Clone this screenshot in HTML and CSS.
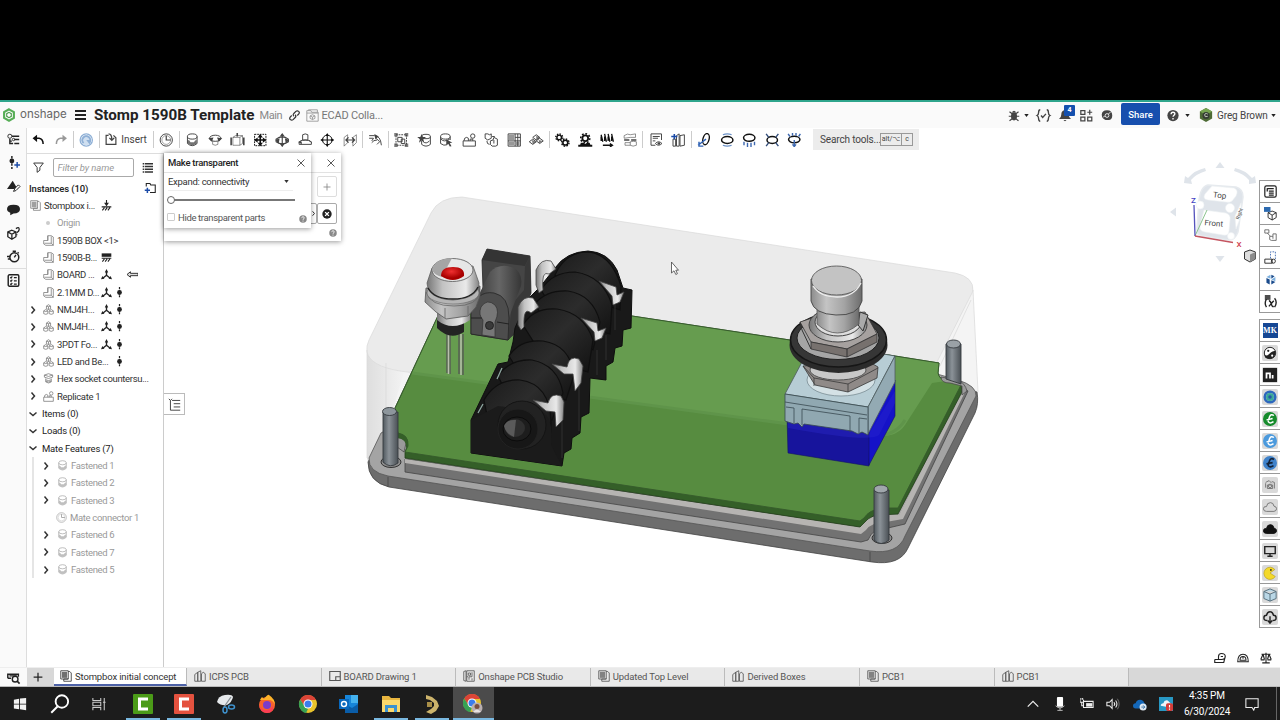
FILE: index.html
```html
<!DOCTYPE html>
<html lang="en">
<head>
    <meta charset="UTF-8">
    <meta name="viewport" content="width=device-width, initial-scale=1.0">
    <title>Stomp 1590B Template</title>
    <link rel="stylesheet" href="styles.css">
</head>
<body>
    <!-- icon sprites, all on a 16 x 16 grid -->
    <svg class="sprites">
        <symbol id="caret" viewBox="0 0 16 16"><path class="f" d="M1 3h14l-7 10z"/></symbol>
        <symbol id="chev" viewBox="0 0 16 16"><path d="M5 1l6 7-6 7" stroke-width="3"/></symbol>
        <symbol id="chevdown" viewBox="0 0 16 16"><path d="M1 5l7 6 7-6" stroke-width="3"/></symbol>
        <symbol id="close" viewBox="0 0 16 16"><path d="M1 1l14 14M15 1L1 15"/></symbol>
        <symbol id="help" viewBox="0 0 16 16"><circle class="f" cx="8" cy="8" r="7.5"/><path d="M5.5 6.2c0-3.4 5-3.2 5-.4 0 1.8-2.4 1.8-2.4 3.8M8 11.2v2" stroke="#fff" stroke-width="1.8"/></symbol>
        <symbol id="assembly" viewBox="0 0 16 16"><path d="M1 1h10v11H1zM11 2h2l2 2v11H5v-3h6"/><path class="f" d="M2.500 2.500h7v8h-7z" opacity=".7"/></symbol>
        <symbol id="part" viewBox="0 0 16 16"><path d="M7 1h5l3 2v12H4l-3-2V8h6zM12 2v10H2M12 12l3 3M7 8V1"/></symbol>
        <symbol id="subasm" viewBox="0 0 16 16"><path d="M5 3l3-2 3 2v4L8 8 5 7zM5 3l3 1 3-1M8 4v4M1 10l3-2 3 2v4l-3 1-3-1zM1 10l3 1 3-1M9 10l3-2 3 2v4l-3 1-3-1zM9 10l3 1 3-1"/></symbol>
        <symbol id="bolt" viewBox="0 0 16 16"><path d="M2 3q6-4 12 0v3q-6 4-12 0zM2 3q6 4 12 0M4 8v5q4 3 8 0V8M4 10q4 2 8 0M4 12q4 2 8 0"/></symbol>
        <symbol id="replicate" viewBox="0 0 16 16"><path d="M1 9h14v6H1zM2 9q0-4 3-4t2 4M9 9V7h3v2"/><circle cx="12" cy="3.500" r="2.500"/></symbol>
        <symbol id="tripod" viewBox="0 0 16 16"><path d="M8 9V3M8 9l-5 4M8 9l5 4" stroke-width="2"/><path class="f" d="M5.500 5L8 0l2.500 5zM0 15l2-5 3 4zM16 15l-2-5-3 4z"/></symbol>
        <symbol id="dof" viewBox="0 0 16 16"><path d="M8 0v16" stroke-width="1.8" stroke-dasharray="3 1"/><circle class="f" cx="8" cy="8" r="3.5"/></symbol>
        <symbol id="ground" viewBox="0 0 16 16"><path d="M8 0v8M1 10h14M2 15l3-4M6 15l3-4M10 15l3-4" stroke-width="1.6"/><path class="f" d="M4.500 4h7L8 9z"/></symbol>
        <symbol id="group" viewBox="0 0 16 16"><path class="f" d="M1 2h14v5H1z"/><path d="M1 9h14M2 14l3-4M6 14l3-4M10 14l3-4" stroke-width="1.5"/></symbol>
        <symbol id="leftarrow" viewBox="0 0 16 16"><path d="M0 8l5-4v2.300h11v3.400H5V12z" fill="#ddd" stroke-width="1.300"/></symbol>
        <symbol id="clock" viewBox="0 0 16 16"><circle cx="8" cy="8" r="7"/><circle cx="8" cy="8" r="5" opacity=".5"/><path d="M8 3v5h5" stroke-width="1.4"/></symbol>
        <symbol id="cyl" viewBox="0 0 16 16"><ellipse cx="8" cy="4" rx="5.500" ry="3"/><path d="M2.500 4v8q5.500 5 11 0V4"/><path class="f" d="M3 8q2 0 3 2.500h4Q11 8 13 8v4q-5 4-10 0z" opacity=".75"/></symbol>
        <symbol id="revolve" viewBox="0 0 16 16"><ellipse cx="8" cy="6" rx="6.500" ry="3.500"/><path d="M5 9v4q3 2 6 0V9" opacity=".6"/><path class="f" d="M0 6l6-1-2 5zM16 6l-6-1 2 5z"/></symbol>
        <symbol id="slider" viewBox="0 0 16 16"><path d="M3 5h8v9H3zM3 5l3-2h8l-3 2M14 3v9l-3 2" opacity=".6"/><path d="M1 5v9M15.500 5v9M8 0v4" stroke-width="1.8"/></symbol>
        <symbol id="planar" viewBox="0 0 16 16"><path d="M1.500 1.500h13v13h-13z" stroke-dasharray="2 1"/><path d="M8 2v12M2 8h12" stroke-width="1.800"/><path class="f" d="M5 5l3-4 3 4zM5 11l3 4 3-4zM5 5L1 8l4 3zM11 5l4 3-4 3z"/></symbol>
        <symbol id="cylindrical" viewBox="0 0 16 16"><path d="M1 7q7-5 14 0v3q-7 5-14 0zM8 1v14" stroke-width="1.3"/><path class="f" d="M5 4l3-4 3 4zM5 12l3 4 3-4zM0 8l5-2-1 6zM16 8l-5-2 1 6z"/></symbol>
        <symbol id="pinslot" viewBox="0 0 16 16"><path d="M5 2q3-2 6 0v6H5zM1 10q7-4 14 0v3H1zM4 8l-3 3M12 8l3 3"/><path class="f" d="M0 10h4v3z"/></symbol>
        <symbol id="ball" viewBox="0 0 16 16"><circle cx="8" cy="8" r="5.500"/><path d="M8 1v14M1 8h14" stroke-width="1.300"/><path class="f" d="M6 3.500L8 0l2 3.500zM6 12.500L8 16l2-3.500zM3.500 6L0 8l3.500 2zM12.500 6L16 8l-3.500 2z"/></symbol>
        <symbol id="parallel" viewBox="0 0 16 16"><path d="M1 5l4-3v9l-4 4zM11 5l4-3v9l-4 4z" opacity=".6"/><path d="M3 8h10M6 5L3 8l3 3M10 5l3 3-3 3" stroke-width="1.400"/></symbol>
        <symbol id="tangent" viewBox="0 0 16 16"><path d="M1 3h6q7 0 8 11M1 6h5l-2 3M10 8q-4 0-6 3M9 6l4 4-3 3"/><path class="f" d="M7 1l5 3-4 3z"/></symbol>
        <symbol id="groupbox" viewBox="0 0 16 16"><path d="M2 2h12v12H2z" stroke-dasharray="2 1"/><path d="M4 5h5v5H4zM8 7h4v5H8z"/><path class="f" d="M0 0h4v4H0zM12 0h4v4h-4zM0 12h4v4H0zM12 12h4v4h-4z" opacity=".7"/></symbol>
        <symbol id="starcyl" viewBox="0 0 16 16"><ellipse cx="10" cy="4" rx="5" ry="2.500"/><path d="M15 4v9q-5 4-10 0V9M7 10q3 3 7-1"/><path class="f" d="M5 1l1.500 3.500H10L7 7l1 4-3-2.500L2 11l1-4-3-2.500h3.500z"/></symbol>
        <symbol id="selcyl" viewBox="0 0 16 16"><ellipse cx="7" cy="4" rx="5.500" ry="3"/><path d="M1.500 4v8q4 3 7 1.500M12.500 4v4M2 7q3 4 10 0"/><path class="f" d="M8 7l7 4-3 .5 2 3.500-2 .500-1.500-3L8 14z"/></symbol>
        <symbol id="pattern" viewBox="0 0 16 16"><path d="M1 1h3l2 1 2-1v5L4 8 1 6zM7 9l3-1 1-3 4 2v7l-2 1H9l-2-2z"/><path d="M3 9q0 4 3 4M9 4h3M11 8v4"/></symbol>
        <symbol id="gridbox" viewBox="0 0 16 16"><path d="M1 1h14v14H1z"/><path class="f" d="M2 2h6v6H2zM2 10h6v4H2zM10 10h4v4h-4z" opacity=".55"/><path d="M9 1v14M1 9h14M12 1v14M9 5h6"/></symbol>
        <symbol id="explode" viewBox="0 0 16 16"><path d="M8 2l4 3-4 3-4-3zM4 7l4 3-4 3-4-3zM12 6l4 3-4 3-4-3z"/><path class="f" d="M3 8l5 2-4 3zM8 3l4 2-4 3zM11 8l4 1-4 3z" opacity=".7"/></symbol>
        <symbol id="gears" viewBox="0 0 16 16"><circle cx="4.500" cy="5" r="2.600" stroke-width="1.600"/><circle cx="4.500" cy="5" r="3.900" stroke-width="1.600" stroke-dasharray="1.600 1.450"/><circle cx="11.500" cy="11" r="2.800" stroke-width="1.800"/><circle cx="11.500" cy="11" r="4.200" stroke-width="1.600" stroke-dasharray="1.800 1.500"/></symbol>
        <symbol id="rack" viewBox="0 0 16 16"><circle cx="8" cy="6" r="3.300" stroke-width="2"/><circle cx="8" cy="6" r="5.200" stroke-width="1.800" stroke-dasharray="2 2"/><path d="M0 14.500h16" stroke-width="2.200"/><path class="f" d="M3 11h3l2 1.500 2-1.500h3l1 3H2z"/></symbol>
        <symbol id="screw" viewBox="0 0 16 16"><path d="M1 2l2 8M5 1l2 9M9 1l2 9M13 1l2 9M1 4v5M5 4v5M9 4v5M13 4v5" stroke-width="1.500"/><path d="M3 14h11M11 12l3 2-3 2" stroke-width="1.500"/></symbol>
        <symbol id="linear" viewBox="0 0 16 16"><path d="M1 3q4-3 7-1l6-1v4H8L1 6zM8 10q4-1 7 0v4q-4 2-7 0zM8 11H2v3h6" opacity=".6"/><path d="M9 8h6M1 8h6" stroke-width="1.600"/></symbol>
        <symbol id="report" viewBox="0 0 16 16"><path d="M2 1h12v7M2 1v13h5M4 4h8M4 6h6M4 9h3"/><path d="M7 12q3.500-4 7.500 0-4 4-7.500 0z"/><circle class="f" cx="11" cy="12" r="1.500"/></symbol>
        <symbol id="bom" viewBox="0 0 16 16"><path d="M6 3l3-2v14H6zM10 3l5-1v12l-5 1zM2 7h3v8H2z"/><path d="M0 4h7M3.500 1v6" stroke="#1c4ca8" stroke-width="1.800"/></symbol>
        <symbol id="ring1" viewBox="0 0 16 16"><ellipse cx="10" cy="7" rx="3.500" ry="6.500" stroke-width="1.600" transform="rotate(15 10 7)"/><path d="M1 14l5-4 4-3M2 10v5h5" stroke="#2f62b5" stroke-width="1.700"/></symbol>
        <symbol id="ring2" viewBox="0 0 16 16"><ellipse cx="8" cy="8" rx="6.500" ry="4" stroke-width="1.700"/><path d="M3 2q5-2 10 0M3 14q5 2 10 0" stroke="#6d93c9" stroke-width="1.500"/></symbol>
        <symbol id="ring3" viewBox="0 0 16 16"><ellipse cx="8" cy="5.500" rx="6.500" ry="4" stroke-width="1.700"/><path d="M2 10v4M6 11v5M10 11v5M14 10v4" stroke="#3d68b0" stroke-width="1.600"/></symbol>
        <symbol id="ring4" viewBox="0 0 16 16"><ellipse cx="8" cy="8" rx="6" ry="4" stroke-width="1.700"/><path d="M1 1l3 4M15 1l-3 4M1 15l3-4M15 15l-3-4" stroke="#334d7a" stroke-width="1.600"/></symbol>
        <symbol id="ring5" viewBox="0 0 16 16"><ellipse cx="8" cy="7.500" rx="6.500" ry="3.700" stroke-width="1.700"/><path d="M1 1l2 3M6 0v3M10 0v3M15 1l-2 3M8 8v7M6 13l2 2.500 2-2.500" stroke="#3d68b0" stroke-width="1.600"/></symbol>
        <symbol id="undo" viewBox="0 0 16 16"><path d="M4 6.500h5q5 1 5 7" stroke-width="1.900"/><path class="f" d="M6.500 2v9L1 6.500z"/></symbol>
        <symbol id="regen" viewBox="0 0 16 16"><circle cx="8" cy="8" r="7" stroke-width="1.500"/><circle cx="8" cy="8" r="6" fill="#cfdff0" stroke="none"/><path d="M5 11.500A4.500 4.500 0 1 1 11.500 11" stroke-width="2.200"/><path class="f" d="M8 8h5l-1 5z"/></symbol>
        <symbol id="insert" viewBox="0 0 16 16"><path d="M5 3H2v11h12V6l-3-3M2 14V5" stroke-width="1.500"/><path d="M5 1q4 0 4 7M6 6l3 3 3-3" stroke-width="1.600"/></symbol>
        <symbol id="partstudio" viewBox="0 0 16 16"><path d="M1 6l4-3v12H1zM5 3l4-2v14H5zM10 5q2-4 5 0v10h-5z"/></symbol>
        <symbol id="drawing" viewBox="0 0 16 16"><path d="M1 2h14v12H1zM9 14v-5h6" stroke-width="1.500"/></symbol>
        <symbol id="pcb" viewBox="0 0 16 16"><path d="M1 2l3-1v14l-3-1zM5 1h10v14H5zM7 4h3v3H7zM12 3v6H8v4M12 11v3M5 9h2"/></symbol>
        <symbol id="euro" viewBox="0 0 16 16"><circle class="f" cx="8" cy="8" r="8"/><path d="M12.500 4Q9 1.500 7.500 5.500T6 11q2 3 6 0M4 9l7-1.500" stroke="#fff" stroke-width="1.700"/></symbol>
        <symbol id="euro-dark" viewBox="0 0 16 16"><circle class="f" cx="8" cy="8" r="8"/><path d="M12.500 4Q9 1.500 7.500 5.500T6 11q2 3 6 0M4 9l7-1.500" stroke="#142339" stroke-width="1.900"/></symbol>
        <symbol id="cloud" viewBox="0 0 16 16"><path d="M4 13q-3.500 0-3.500-3T4 7.500Q4.500 3 8.500 3q3.500 0 4 4 3 .500 3 3t-3 3z"/></symbol>
        <symbol id="cube" viewBox="0 0 16 16"><path d="M8 1l7 3v8l-7 3-7-3V4zM1 4l7 3 7-3M8 7v8"/></symbol>
    </svg>

    <div class="letterbox"></div>

    <header class="header">
        <svg class="logo" viewBox="0 0 16 16"><path d="M8 1.500l5.600 3.200v6.600L8 14.500l-5.600-3.200V4.700z" fill="none" stroke="#57ae57" stroke-width="2.400"/><path d="M8 5l2.600 1.500v3L8 11 5.400 9.500v-3z" fill="#fff" stroke="#4b9b4b" stroke-width="1.300"/></svg>
        <span class="brand">onshape</span>
        <div class="burger"><i></i><i></i><i></i></div>
        <h1 class="doc-title">Stomp 1590B Template</h1>
        <span class="branch">Main</span>
        <svg class="icon link" viewBox="0 0 16 16"><path d="M7 9q-2-2 0-4l3-3q2-1.500 4 0t0 4l-2 2M9 7q2 2 0 4l-3 3q-2 1.500-4 0t0-4l2-2" stroke-width="1.800"/></svg>
        <svg class="icon folder" viewBox="0 0 16 16"><path d="M1 15V2h5l1 2h8v11zM1 5h14M3 2V1h11v3"/><path d="M8 7l3 1.500v3L8 13l-3-1.500v-3zM5 8.500L8 10l3-1.500M8 10v3"/></svg>
        <span class="project">ECAD Colla...</span>
        <div class="account">
            <svg class="icon solid bug" viewBox="0 0 16 16"><ellipse class="f" cx="8" cy="9" rx="4" ry="5.500"/><path d="M1 9h14M2 3l4 3M14 3l-4 3M2 15l4-3M14 15l-4-3" stroke-width="1.600"/><path class="f" d="M5 4q3-5 6 0z"/></svg>
            <svg class="icon small-caret"><use href="#caret"/></svg>
            <svg class="icon braces" viewBox="0 0 16 16"><path d="M4 1Q2 1 2 4t-2 4q2 1 2 4t2 3M12 1q2 0 2 3t2 4q-2 1-2 4t-2 3M5 8l2 2.500L11 6" stroke-width="1.700"/></svg>
            <div class="bell">
                <svg class="icon solid" viewBox="0 0 16 16"><path class="f" d="M8 1q5 0 5 6 0 4 3 5.500H0Q3 11 3 7q0-6 5-6zM6 14h4q-2 3-4 0z"/></svg>
                <span class="badge">4</span>
            </div>
            <svg class="icon apps" viewBox="0 0 16 16"><path d="M1 2h5v4.500H1zM1 10h5v4.500H1zM9.500 10h5v4.500h-5zM12 1v6M9 4h6" stroke-width="1.500"/></svg>
            <svg class="icon solid head" viewBox="0 0 16 16"><path class="f" d="M8 1q7 0 7 7 0 5-4 6H6q-5-2-5-7 0-6 7-6z"/><circle cx="8" cy="8" r="2.500" stroke="#fff"/><path d="M10 6l3-3M5 9l-2 1" stroke="#fff"/></svg>
            <button class="share">Share</button>
            <svg class="icon solid qmark"><use href="#help"/></svg>
            <svg class="icon small-caret"><use href="#caret"/></svg>
            <svg class="avatar" viewBox="0 0 16 16"><path d="M8 0l7 4v8l-7 4-7-4V4z" fill="#4e6b35"/><path d="M8 0l7 4-7 4-7-4z" fill="#77a451"/><circle cx="8" cy="8.500" r="4" fill="#353c34"/><path d="M10 7q-3-2-3.500 1t3.500 1.500" stroke="#cfd6c8" fill="none"/></svg>
            <span class="user">Greg Brown</span>
            <svg class="icon small-caret"><use href="#caret"/></svg>
        </div>
    </header>

    <main class="main">
        <nav class="rail">
            <svg class="icon" viewBox="0 0 16 16"><circle cx="3.500" cy="4" r="2.500"/><path d="M3.500 7v6h4M6 4h9M9 8h6M9 13h6M3 10h3" stroke-width="1.700"/><circle cx="8" cy="8" r="1.500"/></svg>
            <svg class="icon" viewBox="0 0 16 16"><path d="M6 0v16" stroke-width="1.800" stroke-dasharray="3 1.500"/><circle class="f" cx="6" cy="6" r="3"/><path d="M9 11h7M12.500 7.500v7" stroke="#1c4ca8" stroke-width="1.800"/></svg>
            <svg class="icon" viewBox="0 0 16 16"><path class="f" d="M7 1l6 10H0z"/><path d="M8 14l2-4 4-4 2 2-5 5z" fill="#fff" stroke-width="1.200"/></svg>
            <svg class="icon" viewBox="0 0 16 16"><path class="f" d="M8 2q8 0 8 5.500T8 13L4 15v-3Q0 11 0 7.500 0 2 8 2z"/></svg>
            <svg class="icon" viewBox="0 0 16 16"><path d="M6 4l5 2v6l-5 3-5-3V6zM1 6l5 3 5-3M6 9v6" stroke-width="1.600"/><path d="M11 2q4-3 4 1 0 2-3 4M12 9v1" stroke-width="1.600"/></svg>
            <svg class="icon" viewBox="0 0 16 16"><circle cx="9" cy="9" r="5.500" stroke-width="1.800"/><path d="M9 9l2-3M7 1.500h4M0 8h4M1 11h3M13 3l1.500 1" stroke-width="1.700"/></svg>
            <svg class="icon last" viewBox="0 0 16 16"><rect x="1.500" y="1" width="13" height="14" rx="1.500" stroke-width="1.800"/><path d="M4 4l1 1 1.500-2M4 8l1 1 1.500-2M4 12l1 1 1.500-2M8.500 4.500H12M8.500 8.500H12M8.500 12.500H12" stroke-width="1.400"/></svg>
        </nav>

        <div class="work">
            <div class="toolbar">
                <svg class="tool small dark"><use href="#undo"/></svg>
                <svg class="tool redo"><use href="#undo"/></svg>
                <i class="sep"></i>
                <svg class="tool regen"><use href="#regen"/></svg>
                <i class="sep"></i>
                <div class="insert"><svg class="tool"><use href="#insert"/></svg>Insert</div>
                <i class="sep"></i>
                <svg class="tool"><use href="#clock"/></svg>
                <i class="sep"></i>
                <svg class="tool"><use href="#cyl"/></svg>
                <svg class="tool"><use href="#revolve"/></svg>
                <svg class="tool"><use href="#slider"/></svg>
                <svg class="tool dark"><use href="#planar"/></svg>
                <svg class="tool"><use href="#cylindrical"/></svg>
                <svg class="tool"><use href="#pinslot"/></svg>
                <svg class="tool dark"><use href="#ball"/></svg>
                <svg class="tool"><use href="#parallel"/></svg>
                <i class="sep"></i>
                <svg class="tool"><use href="#tangent"/></svg>
                <i class="sep"></i>
                <svg class="tool"><use href="#groupbox"/></svg>
                <svg class="tool"><use href="#starcyl"/></svg>
                <svg class="tool"><use href="#selcyl"/></svg>
                <svg class="tool"><use href="#replicate"/></svg>
                <svg class="tool"><use href="#pattern"/></svg>
                <svg class="tool"><use href="#gridbox"/></svg>
                <svg class="tool"><use href="#explode"/></svg>
                <i class="sep"></i>
                <svg class="tool dark"><use href="#gears"/></svg>
                <svg class="tool dark"><use href="#rack"/></svg>
                <svg class="tool dark"><use href="#screw"/></svg>
                <svg class="tool"><use href="#linear"/></svg>
                <i class="sep"></i>
                <svg class="tool"><use href="#report"/></svg>
                <svg class="tool"><use href="#bom"/></svg>
                <i class="sep"></i>
                <svg class="tool dark"><use href="#ring1"/></svg>
                <svg class="tool dark"><use href="#ring2"/></svg>
                <svg class="tool dark"><use href="#ring3"/></svg>
                <svg class="tool dark"><use href="#ring4"/></svg>
                <svg class="tool dark"><use href="#ring5"/></svg>
                <div class="search"><span>Search tools...</span><kbd>alt/⌥</kbd><kbd>c</kbd></div>
            </div>

            <div class="workspace">
                <aside class="panel">
                    <div class="filter">
                        <svg class="icon" viewBox="0 0 16 16"><path d="M1 1.500h14L10 8v4l-4 3V8z" stroke-width="1.400"/></svg>
                        <input type="text" placeholder="Filter by name">
                        <svg class="icon" viewBox="0 0 16 16"><path d="M1 2.500h2M4 2.500h12M1 6.500h2M4 6.500h12M1 10.500h2M4 10.500h12M1 14.500h2M4 14.500h12" stroke-width="2"/></svg>
                    </div>
                    <div class="instances">
                        <span>Instances (10)</span>
                        <svg class="icon" viewBox="0 0 16 16"><path d="M3 6V2h5l1 2h6v10H8" stroke-width="1.400"/><path d="M1 11h7M4.500 7.500v7" stroke="#1c4ca8" stroke-width="2"/></svg>
                    </div>
                    <ul class="tree">
                        <li class="root"><svg class="ic"><use href="#assembly"/></svg><span class="name">Stompbox i...</span><svg class="st"><use href="#ground"/></svg></li>
                        <li class="origin"><b></b><span class="name">Origin</span></li>
                        <li><svg class="ic"><use href="#part"/></svg><span class="name wide">1590B BOX &lt;1&gt;</span></li>
                        <li><svg class="ic"><use href="#part"/></svg><span class="name">1590B-B...</span><svg class="st"><use href="#group"/></svg></li>
                        <li><svg class="ic"><use href="#part"/></svg><span class="name">BOARD ...</span><svg class="st"><use href="#tripod"/></svg><svg class="st far"><use href="#leftarrow"/></svg></li>
                        <li><svg class="ic"><use href="#part"/></svg><span class="name">2.1MM D...</span><svg class="st"><use href="#tripod"/></svg><svg class="st"><use href="#dof"/></svg></li>
                        <li class="open"><svg class="ch"><use href="#chev"/></svg><svg class="ic"><use href="#subasm"/></svg><span class="name">NMJ4H...</span><svg class="st"><use href="#tripod"/></svg><svg class="st"><use href="#dof"/></svg></li>
                        <li class="open"><svg class="ch"><use href="#chev"/></svg><svg class="ic"><use href="#subasm"/></svg><span class="name">NMJ4H...</span><svg class="st"><use href="#tripod"/></svg><svg class="st"><use href="#dof"/></svg></li>
                        <li class="open"><svg class="ch"><use href="#chev"/></svg><svg class="ic"><use href="#subasm"/></svg><span class="name">3PDT Fo...</span><svg class="st"><use href="#tripod"/></svg><svg class="st"><use href="#dof"/></svg></li>
                        <li class="open"><svg class="ch"><use href="#chev"/></svg><svg class="ic"><use href="#subasm"/></svg><span class="name led">LED and Be...</span><svg class="st"><use href="#dof"/></svg></li>
                        <li class="open"><svg class="ch"><use href="#chev"/></svg><svg class="ic"><use href="#bolt"/></svg><span class="name wide">Hex socket countersu...</span></li>
                        <li class="open"><svg class="ch"><use href="#chev"/></svg><svg class="ic"><use href="#replicate"/></svg><span class="name wide">Replicate 1</span></li>
                        <li class="open section"><svg class="ch"><use href="#chevdown"/></svg>Items (0)</li>
                        <li class="open section"><svg class="ch"><use href="#chevdown"/></svg>Loads (0)</li>
                        <li class="open section"><svg class="ch"><use href="#chevdown"/></svg>Mate Features (7)</li>
                    </ul>
                    <ul class="tree mates">
                        <li><svg class="ch"><use href="#chev"/></svg><svg class="ic"><use href="#cyl"/></svg>Fastened 1</li>
                        <li><svg class="ch"><use href="#chev"/></svg><svg class="ic"><use href="#cyl"/></svg>Fastened 2</li>
                        <li><svg class="ch"><use href="#chev"/></svg><svg class="ic"><use href="#cyl"/></svg>Fastened 3</li>
                        <li class="leaf"><svg class="ic"><use href="#clock"/></svg>Mate connector 1</li>
                        <li><svg class="ch"><use href="#chev"/></svg><svg class="ic"><use href="#cyl"/></svg>Fastened 6</li>
                        <li><svg class="ch"><use href="#chev"/></svg><svg class="ic"><use href="#cyl"/></svg>Fastened 7</li>
                        <li><svg class="ch"><use href="#chev"/></svg><svg class="ic"><use href="#cyl"/></svg>Fastened 5</li>
                    </ul>
                </aside>

                <section class="viewport">
                    <svg class="scene" viewBox="164 153 1116 514">
                        <defs>
                            <linearGradient id="pin"><stop offset="0" stop-color="#50585e"/><stop offset=".4" stop-color="#8b9298"/><stop offset="1" stop-color="#4a5055"/></linearGradient>
                            <linearGradient id="steel"><stop offset="0" stop-color="#8c8c8c"/><stop offset=".3" stop-color="#c4c4c4"/><stop offset=".65" stop-color="#a4a4a4"/><stop offset="1" stop-color="#6c6c6c"/></linearGradient>
                            <linearGradient id="chrome"><stop offset="0" stop-color="#777"/><stop offset=".3" stop-color="#c2c2c2"/><stop offset=".75" stop-color="#e9e9e9"/><stop offset="1" stop-color="#858585"/></linearGradient>
                            <linearGradient id="wall"><stop offset="0" stop-color="#dedede"/><stop offset="1" stop-color="#f3f3f3"/></linearGradient>
                            <linearGradient id="disc" x1="0" y1="0" x2="1" y2="1"><stop offset="0" stop-color="#1b1b1b"/><stop offset=".45" stop-color="#2c2c2c"/><stop offset="1" stop-color="#121212"/></linearGradient>
                            <linearGradient id="barrel"><stop offset="0" stop-color="#3b3b3b"/><stop offset=".5" stop-color="#666"/><stop offset="1" stop-color="#363636"/></linearGradient>
                            <radialGradient id="bulb" cx=".45" cy=".35"><stop offset="0" stop-color="#f03030"/><stop offset="1" stop-color="#a80000"/></radialGradient>
                        </defs>

                        <!-- transparent enclosure -->
                        <path d="M367 352L367 460Q371 480 390 476L410 430 900 500 978 395 973 290 960 274 400 360z" fill="#f4f4f4"/>
                        <path d="M367 350V460L384 440 404 372Q374 368 367 350z" fill="url(#wall)"/>
                        <path d="M367 352Q366 346 369 340L431 213Q439 197 462 197L955 273Q974 277 973 291L905 425Q895 440 868 435L400 371Q370 366 367 352z" fill="#ebebeb" stroke="#dadada" stroke-width=".7"/>
                        <path d="M973 290L978 392M971 300L940 366M367 350V458M386 363V410" fill="none" stroke="#d9d9d9" stroke-width=".7"/>

                        <!-- base plate -->
                        <path d="M368 462Q368 482 389 487L872 562Q900 566 908 548L975 413Q979 404 977 392L960 388 380 440z" fill="#6d6d6d" stroke="#444" stroke-width=".8"/>
                        <path d="M369 458L381 433 440 400 930 372 958 380Q977 386 976 396L905 536Q898 555 870 551L388 476Q368 472 369 458z" fill="#a4a4a4" stroke="#555" stroke-width=".8"/>
                        <path d="M388 477V487M870 552V562" stroke="#444" stroke-width=".8"/>
                        <path d="M405 459L860 527 866 519Q870 515 882 515L899 517 962 388 968 391 905 524 888 528Q873 527 868 540L861 542 405 472z" fill="#727272" stroke="#444" stroke-width=".8"/>
                        <path d="M405 459L860 527 868 518 885 514 899 515 962 388 966 390 903 519 886 522Q872 522 866 530L861 534 405 463z" fill="#b6b4b2"/>
                        <!-- circuit board -->
                        <path d="M398 434Q411 436 407 447L405 452V458L860 527 868 519Q873 515 880 515L898 514 962 392 961 384z" fill="#345f28" stroke="#233f1b" stroke-width=".8"/>
                        <path d="M395 408L450 290 632 316 895 356 939 363 938 373Q939 379 946 381L961 385 898 508 882 508Q869 510 864 518L860 521 405 452 408 446Q409 435 398 433L395 421z" fill="#578c40" stroke="#355a2b" stroke-width=".9"/>
                        <path d="M412 373L450 290 632 316 939 363 938 373Q939 379 946 381L932 383 905 425Q895 440 868 435z" fill="#669c4f"/>
                        <path d="M412 373L870 435Q894 438 905 420" fill="none" stroke="#5f944a" stroke-width="3"/>
                        <path d="M395 408L450 290M632 316L895 356 939 363 938 373Q939 379 946 381L961 385" fill="none" stroke="#355a2b" stroke-width=".9"/>

                        <!-- power jack -->
                        <path d="M482 260L487 249 530 256 531 293 514 333 508 340 471 334 471 313 483 288z" fill="#454545" stroke="#252525" stroke-width=".8"/>
                        <path d="M482 260L487 249 530 256 525 266z" fill="#343434"/>
                        <path d="M525 266L530 256 531 293 514 335 508 339 512 304 524 290z" fill="#383838"/>
                        <path d="M477 299L490 272Q500 262 514 268 523 273 521 286L509 317z" fill="url(#barrel)"/>
                        <path d="M471 334V313Q476 290 494 293 509 296 509 318L508 340z" fill="#4d4d4d" stroke="#262626" stroke-width=".8"/>
                        <path d="M482 335L483 320Q478 315 481 307 487 298 495 305 500 311 495 322V337z" fill="#777" stroke="#303030" stroke-width=".7"/>
                        <ellipse cx="489.500" cy="325.500" rx="4" ry="4" fill="#3a3a3a" stroke="#222"/>
                        <path d="M471 318H482M497 322L509 324" stroke="#222"/>

                        <!-- led and bezel -->
                        <path d="M447 334V373M450 334V374M459 334V374M463 334V375" stroke="#555" stroke-width="1.300"/>
                        <path d="M448.500 334V374M461 334V375" stroke="#b9bfae" stroke-width="1.500"/>
                        <path d="M437 316V328Q450 341 464 332V316z" fill="#232323"/>
                        <path d="M437 308V320Q452 332 470 320V308z" fill="url(#chrome)"/>
                        <path d="M426 288L425 302 436 312 446 319 468 316 476 307 480 296V286z" fill="url(#steel)" stroke="#555" stroke-width=".8"/>
                        <path d="M426 292Q430 306 454 306T480 292M445 308V318M468 306V315" fill="none" stroke="#666" stroke-width=".8"/>
                        <ellipse cx="453" cy="293" rx="26" ry="11" fill="#b5b5b5" stroke="#666" stroke-width=".6"/>
                        <path d="M432 268L427 283Q428 299 453 300 479 298 479 283L473 266z" fill="url(#chrome)" stroke="#555" stroke-width=".7"/>
                        <path d="M428 288Q434 299 453 299T478 287" fill="none" stroke="#222" stroke-width="1.400"/>
                        <ellipse cx="452.500" cy="270" rx="20.500" ry="11.500" fill="#e6e6e6" stroke="#555" stroke-width=".8"/>
                        <path d="M432 270Q434 259 452 258L442 277Q434 275 432 270z" fill="#a5a5a5"/>
                        <path d="M441 276Q441 267 453 267T464 276Q453 284 441 276z" fill="url(#bulb)"/>

                        <!-- audio jacks -->
                        <path d="M555 268Q566 252 588 251 608 252 617 270L623 288 632 290 631 328 623 330 622 346 615 348 613 362 606 366 606 380 590 378 589 413 581 417 580 433 572 438 571 449 564 453 562 466 471 453V420L498 364 508 362 513 342 515 328 527 300 540 287z" fill="#191919" stroke="#0e0e0e"/>
                        <g fill="url(#disc)" stroke="#0f0f0f" stroke-width="1.200">
                            <path d="M555 275Q565 252 588 252 611 254 621 286L620 310 590 300z"/>
                            <path d="M541 290Q552 272 575 272 603 276 612 305L610 334 560 320z"/>
                            <path d="M535 304Q546 290 568 291 593 295 600 322L593 350 550 330z"/>
                            <path d="M523 325Q534 307 557 309 584 313 593 340L588 372 545 360z"/>
                            <path d="M509 356Q520 339 543 341 570 345 574 375L566 400 530 390z"/>
                            <path d="M498 376Q510 359 532 360 558 365 563 393L552 420 510 400z"/>
                            <path d="M484 400Q496 379 520 380 550 384 551 422L550 450 490 430z"/>
                        </g>
                        <path d="M471 420L498 406 543 412Q554 420 551 445L562 466 471 453z" fill="#1b1b1b"/>
                        <ellipse cx="522" cy="425" rx="24" ry="24" fill="#222" stroke="#141414"/>
                        <ellipse cx="518" cy="429" rx="20" ry="20" fill="#171717" stroke="#222"/>
                        <ellipse cx="517" cy="429" rx="14" ry="12" fill="#1d1d1d" stroke="#0b0b0b"/>
                        <ellipse cx="515" cy="428" rx="10" ry="9" fill="#2f2f2f"/>
                        <path d="M504 426Q507 419 516 420L514 437Q506 434 504 426z" fill="#5a5a5a"/>
                        <path d="M483 404l-5 9M502 368l-5 11" stroke="#8fa8a2" stroke-width="1.300"/>
                        <path d="M615 305v25M606 335v25M579 386v45M562 415v43M597 350v25" stroke="#303030" fill="none"/>
                        <g fill="url(#chrome)" stroke="#444" stroke-width=".8">
                            <path d="M536 285V270Q541 258 551 261L556 269 549 274Q541 270 543 290L539 293z"/>
                            <path d="M518 325V307Q523 295 533 298L539 307 531 313Q523 306 524 327L521 330z"/>
                            <path d="M599 281L616 287 617 295 624 292 620 302 613 305 612 296z"/>
                            <path d="M581 318L597 323 598 331 606 328 602 338 595 341 594 332z"/>
                            <path d="M552 364L567 367Q569 355 579 359L583 366 581 383 575 391 573 374 564 374z"/>
                            <path d="M533 400L548 403Q551 392 561 396L564 402 563 420 556 427 555 412 546 411z"/>
                        </g>

                        <!-- foot switch -->
                        <path d="M787 416L870 434 869 466 788 453z" fill="#17149c" stroke="#111066" stroke-width=".6"/>
                        <path d="M869 430L895 380V416L869 465z" fill="#1512c8" stroke="#111066" stroke-width=".6"/>
                        <path d="M788 419L869 434 895 391 895 403 879 435Q870 443 788 428z" fill="#2e2bd2" opacity=".35"/>
                        <path d="M785 394L802 362 872 352 895 356 868 407z" fill="#b7cdd5" stroke="#4e5b60" stroke-width=".8"/>
                        <path d="M868 407L895 356V382L868 434z" fill="#93aab3" stroke="#4e5b60" stroke-width=".8"/>
                        <path d="M785 394L868 407V435L862 432 858 434 852 431 804 424 802 427 798 423 794 424 785 421z" fill="#90a8b1" stroke="#394950" stroke-width=".8"/>
                        <path d="M785 402L867 415M786 407L794 408V423M802 425V409L850 416V432M867 419L859 418V433" fill="none" stroke="#394950" stroke-width=".8"/>
                        <ellipse cx="841" cy="380" rx="34" ry="16" fill="#d4e1e5" stroke="#70828a" stroke-width=".7"/>
                        <path d="M803 366L815 385 848 392 877 378 878 367 866 360z" fill="#8f8a88" stroke="#393939" stroke-width=".8"/>
                        <path d="M803 366L814 378 848 384 878 368M848 384V392M814 378V386" fill="none" stroke="#393939" stroke-width=".8"/>
                        <ellipse cx="838" cy="370" rx="28" ry="10" fill="#c8c8c8" stroke="#555"/>
                        <ellipse cx="838.500" cy="345" rx="49" ry="28" fill="#2b2b2b"/>
                        <ellipse cx="838.500" cy="340" rx="48" ry="27" fill="#363636" stroke="#161616" stroke-width="1.500"/>
                        <ellipse cx="838" cy="338" rx="41" ry="21.500" fill="#a5a5a5" stroke="#222"/>
                        <path d="M800 322L811 342 847 349 877 334 865 312 818 316z" fill="#a6a19f" stroke="#333" stroke-width=".8"/>
                        <path d="M811 342V349L847 357 877 342V334L847 349z" fill="#77716e" stroke="#333" stroke-width=".8"/>
                        <path d="M847 349V357M800 322L802 330 811 349" fill="none" stroke="#333"/>
                        <ellipse cx="838" cy="325" rx="29" ry="17" fill="url(#chrome)" stroke="#444"/>
                        <ellipse cx="838" cy="322" rx="23" ry="14" fill="#dedede" stroke="#444"/>
                        <path d="M860 312L868 315 863 331 858 325z" fill="#aaa" stroke="#333"/>
                        <path d="M817 302V324Q837 342 859 324V302z" fill="url(#steel)" stroke="#555" stroke-width=".8"/>
                        <path d="M811 279V301Q814 314 836 315T862 301V279z" fill="url(#steel)" stroke="#444" stroke-width=".9"/>
                        <ellipse cx="836.500" cy="280.500" rx="25" ry="14.500" fill="#c3c3c3" stroke="#4c4c4c" stroke-width=".8"/>
                        <path d="M813 286Q820 297 837 297T861 283" fill="none" stroke="#ededed" stroke-width="1.300"/>

                        <!-- corner screws -->
                        <path d="M397 437Q406 438 406 443L404 452 397 447z" fill="#9a9a9a" stroke="#333" stroke-width=".6"/>
                        <path d="M397 433Q409 434 408 446L406 448Q407 439 397 438z" fill="#345f28"/>
                        <ellipse cx="391" cy="462" rx="10" ry="5.500" fill="#8b8b8b" stroke="#333"/>
                        <ellipse cx="882" cy="538" rx="10" ry="5.500" fill="#8b8b8b" stroke="#333"/>
                        <path d="M941 377Q941 383 950 383L962 386V395L967 391Q965 383 958 380z" fill="#999" stroke="#444" stroke-width=".7"/>
                        <g stroke="#353a3e" stroke-width=".9">
                            <path d="M383 412V462Q390 469 398 463V412z" fill="url(#pin)"/>
                            <ellipse cx="389.500" cy="411.500" rx="7" ry="4" fill="#8d969c"/>
                            <path d="M874 490V540Q881 547 889 540V490z" fill="url(#pin)"/>
                            <ellipse cx="881" cy="489" rx="7" ry="4" fill="#a0a7ac"/>
                            <path d="M946 344V379L961 384V344z" fill="url(#pin)"/>
                            <ellipse cx="953.500" cy="344" rx="7" ry="4" fill="#9aa1a6"/>
                        </g>

                        <!-- view cube -->
                        <g fill="#dfe4ea">
                            <path d="M1220 162l4.500 6h-9zM1220 262l4.500-6h-9zM1170 212l6-4.500v9z"/>
                            <path d="M1205 168L1206 171Q1196 174 1191 180L1192 184 1184 183 1185 176 1188 178Q1195 170 1205 168zM1235 168L1234 171Q1244 174 1249 180L1249 184 1256 183 1255 176 1252 178Q1245 170 1235 168z"/>
                            <path d="M1208 185L1236 187Q1243 189 1243 197L1238 232Q1235 240 1229 240L1202 236Q1196 235 1197 228L1199 200Q1201 186 1208 185z" stroke="#e6eaee" stroke-width="1.500"/>
                        </g>
                        <g fill="#fff" stroke="#eef1f4" stroke-width=".6">
                            <path d="M1212 186L1234 188Q1239 190 1236 196L1232 201Q1230 203 1226 202L1208 200Q1202 199 1205 194z"/>
                            <path d="M1204 210L1226 213Q1231 215 1230 220L1229 231Q1229 236 1223 235L1205 232Q1199 231 1200 226z"/>
                            <path d="M1241 203L1241 216 1236 229 1235 216z"/>
                            <circle cx="1200" cy="205" r="4"/><circle cx="1230" cy="208" r="4.500"/><circle cx="1231" cy="236" r="3.500"/>
                        </g>
                        <path d="M1195 236L1207 210" stroke="#8bc48f" stroke-width="1"/>
                        <path d="M1195 236L1194 205" stroke="#5553bd" stroke-width="1.300"/>
                        <path d="M1195 236L1233 242.500" stroke="#c45560" stroke-width="1.300"/>
                        <g class="cube-text">
                            <text x="1213" y="198" transform="rotate(7 1219 195)">Top</text>
                            <text x="1204.500" y="226" transform="rotate(5 1214 223)">Front</text>
                            <text x="1233" y="217" class="side" transform="rotate(-70 1238 214)">Right</text>
                            <text x="1191" y="203" class="z">Z</text>
                            <text x="1236.500" y="247" class="x">X</text>
                        </g>
                        <path d="M1250 250L1255.500 252V259L1250 262 1244.500 259V252z" fill="#ddd" stroke="#333"/>
                        <path d="M1250 254.500V262L1255.500 259V252z" fill="#8c8c8c"/>

                        <path class="cursor" d="M671.500 262V273L674 270.800 675.800 274.500 677.400 273.700 675.800 270.200H678.500z"/>
                    </svg>

                    <div class="dialog back">
                        <div class="dialog-head"><svg class="icon"><use href="#close"/></svg></div>
                        <div class="cell plus"><svg class="icon" viewBox="0 0 16 16"><path d="M8 1v14M1 8h14" stroke-width="1.700"/></svg></div>
                        <div class="cell-row">
                            <div class="cell stub"><svg class="icon"><use href="#chev"/></svg></div>
                            <div class="cell"><svg class="icon" viewBox="0 0 16 16"><circle class="f" cx="8" cy="8" r="7.500"/><path d="M5 5l6 6M11 5l-6 6" stroke="#fff" stroke-width="2.200"/></svg></div>
                        </div>
                        <svg class="icon qm"><use href="#help"/></svg>
                    </div>
                    <div class="dialog front">
                        <div class="dialog-head"><span>Make transparent</span><svg class="icon"><use href="#close"/></svg></div>
                        <div class="select"><span>Expand: connectivity</span><svg class="icon"><use href="#caret"/></svg></div>
                        <div class="slider"><b></b></div>
                        <div class="check"><i></i><span>Hide transparent parts</span><svg class="icon qm"><use href="#help"/></svg></div>
                    </div>

                    <div class="flyout"><svg class="icon" viewBox="0 0 16 16"><path d="M5 3h10M7 7h8M7 11h8M5 15h10M3 3v12h2M1 1l2 2 2-2"/></svg></div>

                    <div class="apps-col top-apps">
                        <div><svg class="icon" viewBox="0 0 16 16"><rect x="1" y="1" width="14" height="14" rx="2" stroke-width="1.500"/><path d="M4 4.500h8M6 7.500h6M6 10h6M6 12.500h6M4 4v4" stroke-width="1.600"/></svg></div>
                        <div><svg class="icon" viewBox="0 0 16 16"><path d="M10 5l5 2v6l-5 3-5-3V7zM5 7l5 3 5-3M10 10v6"/><path d="M0 0h8v6H0z" fill="#2c6ab0" stroke="none"/></svg></div>
                        <div><svg class="icon" viewBox="0 0 16 16"><path d="M1 1h5v4H1zM4 5l4 4M7 9h4V6h4v8H9l-2-1zM11 9v3" stroke="#666"/></svg></div>
                        <div><svg class="icon" viewBox="0 0 16 16"><path d="M1 10h9v5H1z"/><circle cx="11.500" cy="12.500" r="2.500"/><path d="M8 9V1h6v9" stroke="#3d68b0" stroke-dasharray="2 1.500"/></svg></div>
                        <div><svg class="icon" viewBox="0 0 16 16"><path d="M8 2v5L3 5zM9 8l5-3v5z" fill="#7eb1df" stroke="none"/><path d="M7 8v6L3 12V6zM9 9l5 2-5 3zM9 2l4 2-4 3z" fill="#1a4b8c" stroke="none"/></svg></div>
                        <div><svg class="icon" viewBox="0 0 16 16"><path d="M3 5q-3 5 0 10M13 4q4 5 0 11M6 7q2 0 3 4t3 3M12 7L6 14" stroke-width="1.700"/><path class="f" d="M1 0h7v6H1z" opacity=".8"/></svg></div>
                    </div>
                    <div class="apps-col plugin-apps">
                        <div><span class="mk">MK</span></div>
                        <div><svg class="icon bg" viewBox="0 0 16 16"><circle cx="8" cy="8" r="6.500" fill="#fff" stroke="#222"/><path class="f" d="M14 5.500Q15 14 8 14.500T2 10Q4 12 7 9T14 5.500z"/><circle class="f" cx="6" cy="5.500" r="1.300"/><circle cx="10.500" cy="11" r="1.200" fill="#fff" stroke="none"/></svg></div>
                        <div><svg class="icon bg" viewBox="0 0 16 16"><path fill="#222" stroke="none" d="M0 0h16v16H0z"/><path d="M4 12V6h4v6M11 8v4" stroke="#fff" stroke-width="2"/></svg></div>
                        <div><svg class="icon bg" viewBox="0 0 16 16"><circle cx="8" cy="8" r="6" stroke="#2d68bd" stroke-width="3"/><circle cx="8" cy="8" r="4.500" fill="#3ba999" stroke="none"/><circle cx="8" cy="8" r="2" fill="#2456a8" stroke="none"/></svg></div>
                        <div><svg class="icon bg green"><use href="#euro"/></svg></div>
                        <div><svg class="icon bg sky"><use href="#euro"/></svg></div>
                        <div><svg class="icon bg blue"><use href="#euro-dark"/></svg></div>
                        <div><svg class="icon bg" viewBox="0 0 16 16"><path d="M3 5l4-2 3 3M5 8h6v4H5zM3 6v5M13 5v7M10 4l3 1" stroke="#777"/><circle cx="8" cy="9" r="2" stroke="#777"/></svg></div>
                        <div><svg class="icon bg gray"><use href="#cloud"/></svg></div>
                        <div><svg class="icon bg full"><use href="#cloud"/></svg></div>
                        <div><svg class="icon bg" viewBox="0 0 16 16"><path d="M2 3h12v8H2zM8 11v3M5 14h6" stroke-width="1.600"/></svg></div>
                        <div><svg class="icon bg" viewBox="0 0 16 16"><path d="M13.500 4A7 7 0 1 0 14 12L8 8z" fill="#f4d92a" stroke="#b39b13" stroke-width=".7"/><circle class="f" cx="9" cy="4.500" r="1"/></svg></div>
                        <div><svg class="icon bg pale"><use href="#cube"/></svg></div>
                        <div><svg class="icon bg" viewBox="0 0 16 16"><path d="M5 12q-4 0-4-3t3-3q1-4 4-4t4 4q3 0 3 3t-4 3M8 7v7M5.500 12L8 15l2.500-3" stroke-width="1.600"/></svg></div>
                    </div>

                    <div class="measure">
                        <svg class="icon" viewBox="0 0 16 16"><path d="M1 10h9q5 0 5-4t-5-4Q6 2 6 6v4M1 10v4h12l2-8M9 6h3" stroke-width="1.500"/></svg>
                        <svg class="icon" viewBox="0 0 16 16"><path d="M1 13Q1 3 8 3t7 10zM4 11q0-5 4-5t4 5zM8 6v3" stroke-width="1.400"/></svg>
                        <svg class="icon" viewBox="0 0 16 16"><path d="M2 3h12M8 1v13M3 14.500h10M4 3l-3 7M4 3l2 7M12 3l-2 7M12 3l3 7M1 10.500h5M10 10.500h5" stroke-width="1.500"/></svg>
                    </div>
                </section>
            </div>
        </div>
    </main>

    <footer class="tabs">
        <div class="tab-search"><svg class="icon" viewBox="0 0 16 16"><path d="M1 9V4h13v3M3 6h9M1 9h4" stroke-width="1.800"/><circle cx="10" cy="10" r="3.500" stroke-width="1.700"/><path d="M12.500 12.500l3 3" stroke-width="2"/></svg></div>
        <div class="tab-add"><svg class="icon" viewBox="0 0 16 16"><path d="M8 1v14M1 8h14" stroke-width="2"/></svg></div>
        <div class="tab active"><svg class="icon"><use href="#assembly"/></svg>Stompbox initial concept</div>
        <div class="tab"><svg class="icon"><use href="#partstudio"/></svg>ICPS PCB</div>
        <div class="tab"><svg class="icon"><use href="#drawing"/></svg>BOARD Drawing 1</div>
        <div class="tab"><svg class="icon"><use href="#pcb"/></svg>Onshape PCB Studio</div>
        <div class="tab"><svg class="icon"><use href="#assembly"/></svg>Updated Top Level</div>
        <div class="tab"><svg class="icon"><use href="#partstudio"/></svg>Derived Boxes</div>
        <div class="tab"><svg class="icon"><use href="#assembly"/></svg>PCB1</div>
        <div class="tab"><svg class="icon"><use href="#partstudio"/></svg>PCB1</div>
    </footer>

    <div class="taskbar">
        <div class="task start"><svg viewBox="0 0 16 16"><path fill="#f2f2f2" d="M1 3l6-1v5.600H1zM8 1.800L15 1v6.600H8zM1 8.500h6V14l-6-1zM8 8.500h7V15l-7-1z"/></svg></div>
        <div class="task"><svg class="big" viewBox="0 0 16 16"><circle cx="9.500" cy="6" r="5" fill="none" stroke="#fff" stroke-width="1.500"/><path d="M6 10l-5 5" stroke="#fff" stroke-width="1.600"/></svg></div>
        <div class="task view"><svg viewBox="0 0 16 16"><path d="M1 1v3h9V1M1 15v-3h9v3M1 6h9v4H1zM14 1v14M12.500 6h3" fill="none" stroke="#ccc" stroke-width="1.200"/></svg></div>
        <div class="task run"><svg class="big" viewBox="0 0 20 20"><rect width="20" height="20" rx="1" fill="#4b9b18"/><path d="M15 5H6.500v10H15" fill="none" stroke="#fff" stroke-width="3"/></svg></div>
        <div class="task run"><svg class="big" viewBox="0 0 20 20"><rect width="20" height="20" rx="1" fill="#e4523f"/><path d="M15 5H6.500v10H15" fill="none" stroke="#fff" stroke-width="3"/></svg></div>
        <div class="task"><svg class="big" viewBox="0 0 20 20"><path d="M1 8Q2 2 9 1q7-1 8 2-1 5-6 8-6 1-10-3z" fill="#e6e9ec"/><path d="M15 3L8 13" stroke="#858d93" stroke-width="1.300"/><ellipse cx="9" cy="16" rx="2" ry="3" fill="none" stroke="#3f93cf" stroke-width="1.500"/><ellipse cx="15.500" cy="13" rx="3" ry="2" fill="none" stroke="#3f93cf" stroke-width="1.500"/></svg></div>
        <div class="task"><svg class="big" viewBox="0 0 20 20"><circle cx="10" cy="11" r="8" fill="#f7632b"/><path d="M3 6q1-2 2-3l2 2q4-5 5-4 6 4 6 10-2-5-6-5T3 6z" fill="#fdb32a"/><circle cx="10" cy="11" r="4" fill="#7a3ccb"/><path d="M2 11q3 6 8 5t6-5q1 8-6 8-7-1-8-8z" fill="#fb3d55"/></svg></div>
        <div class="task"><svg class="big" viewBox="0 0 20 20"><circle cx="10" cy="10" r="9" fill="#e8c32c"/><path d="M2.200 5.500A9 9 0 0 1 18 6H10L6 12z" fill="#dc4437"/><path d="M2.200 5.500L7 13l3 2-2 4A9 9 0 0 1 2.200 5.500z" fill="#37a254"/><circle cx="10" cy="10" r="4.500" fill="#fff"/><circle cx="10" cy="10" r="3.500" fill="#3b7ded"/></svg></div>
        <div class="task"><svg class="big" viewBox="0 0 20 20"><path d="M6 1h13v17H6z" fill="#1685d9"/><path d="M12 1h7v8h-7z" fill="#45b2ee"/><path d="M6 10l7 4 6-4v9H6z" fill="#0a5da8"/><rect y="5" width="10" height="10" fill="#0868be"/><circle cx="5" cy="10" r="2.500" fill="none" stroke="#fff" stroke-width="1.400"/></svg></div>
        <div class="task run"><svg class="big" viewBox="0 0 20 20"><path d="M1 2h7l2 2h9v14H1z" fill="#e9b63f"/><path d="M1 6h18v12H1z" fill="#fbd96c"/><path d="M4 18v-7h12v7h-3v-4H7v4z" fill="#3b93d1"/></svg></div>
        <div class="task run"><svg class="big" viewBox="0 0 20 20"><path d="M4 1l6 2 5 4 2 5-3 5-5 3-5-2 5-3 3-3V9L8 6 4 5z" fill="#cdb46c"/><path d="M5 8h5v5H5z" fill="#a98f48"/></svg></div>
        <div class="task run current"><svg class="big" viewBox="0 0 20 20"><circle cx="9" cy="9" r="9" fill="#e8c32c"/><path d="M1.200 4.500A9 9 0 0 1 17 5H9L5 11z" fill="#dc4437"/><path d="M1.200 4.500L6 12l3 2-2 4A9 9 0 0 1 1.200 4.500z" fill="#37a254"/><circle cx="9" cy="9" r="4.500" fill="#fff"/><circle cx="9" cy="9" r="3.500" fill="#3b7ded"/><circle cx="14" cy="14" r="5.500" fill="#b8afb0"/><circle cx="14" cy="12.500" r="2.500" fill="#7b503e"/><path d="M10 18q4-5 8 0z" fill="#e9e4e2"/></svg></div>
        <div class="tray">
            <svg viewBox="0 0 16 16"><path d="M2 11l6-6 6 6" fill="none" stroke="#eee" stroke-width="1.400"/></svg>
            <svg viewBox="0 0 16 16"><rect x="4.500" y="0" width="7" height="11" rx="1" fill="#fff"/><path d="M3 10q5 5 10 0M8 12v3M5 15.300h6" fill="none" stroke="#ccc"/></svg>
            <svg viewBox="0 0 16 16"><path d="M4 5h11v7H4zM0 3v3h4V3M2 6v4h2M1 1v2M3 1v2" fill="none" stroke="#eee" stroke-width="1.200"/><path d="M7 7h7v4H7z" fill="#eee"/></svg>
            <svg viewBox="0 0 16 16"><path d="M1 6h3l3-3v10l-3-3H1zM9 6q2 2 0 4M11 4q3 4 0 8" fill="none" stroke="#eee" stroke-width="1.200"/><path d="M13 2q4 6 0 12" fill="none" stroke="#777"/></svg>
            <svg viewBox="0 0 16 16"><path d="M3 13q-3 0-3-3t3-3q1-4 5-4t5 4q3 1 2 6z" fill="#1467b8"/><circle cx="11.500" cy="11.500" r="4" fill="#dfe9f2"/><path d="M9.500 11.500h4M11.500 9.500l2 2-2 2" fill="none" stroke="#2f6ba3"/></svg>
            <svg viewBox="0 0 16 16"><path d="M0 0h16v16H0z" fill="#2898c4"/><path d="M2 10q0-3 3-3 1-4 5-3l4 4-6 3z" fill="#eef5f8"/><rect x="8" y="7" width="8" height="9" rx="2" fill="#d43c38"/><path d="M12 9v3M12 13v1.500" stroke="#fff" stroke-width="1.300"/></svg>
            <div class="time"><span>4:35 PM</span><span>6/30/2024</span></div>
            <svg class="notify" viewBox="0 0 16 16"><path d="M1 2h14v10h-4l-1 3-2-3H1z" fill="none" stroke="#eee" stroke-width="1.200"/></svg>
            <i class="peek"></i>
        </div>
    </div>
</body>
</html>
```
FILE: styles.css
```css
* {
    box-sizing: border-box;
}
body {
    margin: 0;
    width: 1280px;
    height: 720px;
    overflow: hidden;
    display: flex;
    flex-direction: column;
    background: #fff;
    font-family: Roboto, "Liberation Sans", sans-serif;
    font-size: 9.5px;
    color: #333;
}
.sprites {
    display: none;
}
svg {
    flex: none;
}
.icon, .tool, .ic, .ch, .st {
    fill: none;
    stroke: currentColor;
    stroke-width: 1.1;
    width: 13px;
    height: 13px;
    overflow: visible;
}
.f {
    fill: currentColor;
    stroke: none;
}

.letterbox {
    height: 102px;
    background: #000;
    border-bottom: 2px solid #2fa58c;
    flex: none;
}

/* header */
.header {
    height: 26px;
    flex: none;
    display: flex;
    align-items: center;
    background: #fafafa;
    padding-left: 2px;
}
.logo {
    width: 14px;
    height: 14px;
}
.brand {
    width: 56px;
    padding-left: 4px;
    font-family: Inter, sans-serif;
    font-size: 11.5px;
    color: #666;
    line-height: 20px;
    margin-bottom: 2px;
}
.burger {
    width: 22px;
    display: grid;
    gap: 2px;
    padding-left: 3px;
}
.burger i {
    width: 11px;
    height: 2px;
    background: #222;
}
.doc-title {
    margin: 0;
    width: 165.5px;
    font-size: 15.2px;
    font-weight: 700;
    color: #222;
    white-space: nowrap;
}
.branch {
    width: 29px;
    font-size: 11px;
    letter-spacing: -0.4px;
    color: #888;
}
.link {
    width: 11px;
    height: 11px;
}
.folder {
    margin-left: 6px;
    color: #999;
}
.project {
    margin-left: 3px;
    font-size: 11px;
    letter-spacing: -0.2px;
    color: #777;
}
.account {
    margin-left: auto;
    padding-right: 4px;
    display: flex;
    align-items: center;
    color: #444;
    height: 26px;
}
.bug { width: 12px; }
.small-caret {
    width: 5px;
    height: 5px;
    margin-left: 4px;
    color: #222;
}
.braces { margin-left: 8px; }
.bell {
    position: relative;
    margin-left: 9px;
    display: flex;
}
.bell .icon { width: 12px; }
.badge {
    position: absolute;
    left: 5px;
    top: -4px;
    width: 11px;
    height: 11px;
    border-radius: 1px;
    background: #1550ae;
    color: #fff;
    font-size: 7px;
    font-weight: 700;
    line-height: 11px;
    text-align: center;
}
.apps { margin-left: 9px; }
.head {
    width: 12px;
    margin-left: 8px;
}
.share {
    width: 39px;
    height: 22px;
    margin: 0 7px 2px 8px;
    padding: 0;
    border: 0;
    border-radius: 2px;
    background: #174fae;
    color: #fff;
    font: 500 9.5px Roboto, sans-serif;
}
.qmark { width: 12px; }
.qmark + .small-caret { margin-left: 6px; }
.avatar {
    width: 14px;
    height: 16px;
    margin: 0 4px 0 9px;
}
.user {
    width: 50px;
    font-size: 10px;
    letter-spacing: -0.1px;
    white-space: nowrap;
}

.main {
    flex: 1;
    min-height: 0;
    display: flex;
}
.rail {
    width: 27px;
    background: #fafafa;
    border-right: 1px solid #ddd;
    display: flex;
    flex-direction: column;
    align-items: center;
    gap: 10.4px;
    padding-top: 5px;
    color: #222;
}
.rail .last {
    box-sizing: content-box;
    padding: 5px 7px;
    margin-top: -5px;
    border-top: 1px solid #ddd;
}
.work {
    flex: 1;
    min-width: 0;
    display: flex;
    flex-direction: column;
}

/* toolbar */
.toolbar {
    height: 25px;
    padding-bottom: 2px;
    flex: none;
    display: flex;
    align-items: center;
    color: #444;
}
.tool {
    width: 22.5px;
    height: 14px;
}
.small { height: 13px; }
.dark { color: #111; }
.redo {
    color: #999;
    height: 13px;
    transform: scaleX(-1);
}
.regen { color: #8fb0d6; }
.sep {
    width: 3.4px;
    height: 17px;
    flex: none;
    border-left: 1px solid #ccc;
    transform: translateX(1px);
}
.insert {
    width: 50.5px;
    display: flex;
    align-items: center;
    font-size: 10px;
}
.insert .tool {
    width: 20px;
    height: 13px;
}
.search {
    margin-left: 7.5px;
    width: 106px;
    height: 21px;
    padding-left: 7px;
    background: #ececec;
    display: flex;
    align-items: center;
    font-size: 10px;
    color: #444;
    white-space: nowrap;
}
.search span {
    width: 60px;
    letter-spacing: -0.15px;
}
kbd {
    border: 1px solid #999;
    font-family: Roboto, "DejaVu Sans", sans-serif;
    font-size: 7px;
    line-height: 10px;
    height: 13px;
    width: 22px;
    text-align: center;
    overflow: hidden;
}
kbd + kbd {
    width: 11px;
    border-left: 0;
}

.workspace {
    flex: 1;
    min-height: 0;
    display: flex;
}

/* instance list */
.panel {
    width: 137px;
    border-top: 1px solid #ddd;
    border-right: 1px solid #ccc;
    flex: none;
    letter-spacing: -0.33px;
}
.filter {
    display: flex;
    align-items: center;
    padding: 4px 10px 0 6px;
    justify-content: space-between;
}
.filter .icon {
    width: 11px;
    height: 11px;
}
.filter input {
    width: 81px;
    height: 19px;
    padding: 0 4px;
    border: 1px solid #aaa;
    border-radius: 2px;
    font: italic 9.5px Roboto, sans-serif;
    letter-spacing: -0.1px;
}
.filter input::placeholder {
    color: #999;
}
.instances {
    height: 20px;
    display: flex;
    align-items: center;
    justify-content: space-between;
    padding: 2px 7px 0 2px;
    font-weight: 500;
    letter-spacing: -0.15px;
    color: #222;
}
.instances .icon {
    width: 12px;
    height: 12px;
}
.tree {
    list-style: none;
    margin: 0;
    padding: 0;
}
.tree li {
    height: 17.33px;
    display: flex;
    align-items: center;
    padding-left: 16px;
    white-space: nowrap;
}
.tree .root { padding-left: 3px; }
.tree .open { padding-left: 2px; }
.ic {
    width: 11px;
    height: 11px;
    margin-right: 3px;
    color: #777;
}
.ch {
    width: 8px;
    height: 8px;
    margin-right: 6px;
    color: #333;
}
.st {
    width: 11px;
    height: 11px;
    margin-right: 2px;
    color: #222;
}
.far { margin-left: 13px; }
.name { width: 44px; }
.root .name { width: 57px; }
.tree .wide { width: auto; }
.tree .led { width: 57px; }
.origin { color: #999; }
.origin b {
    width: 4px;
    height: 4px;
    border-radius: 50%;
    background: #ccc;
    margin: 0 7px 0 3px;
}
.section {
    color: #222;
    letter-spacing: -0.2px;
}
.section .ch { margin-right: 5px; }
.mates {
    margin-left: 5px;
    border-left: 2px solid #e5e5e5;
}
.mates li {
    padding-left: 8px;
    color: #999;
}
.mates .ic {
    color: #aaa;
}
.mates .ch { margin-right: 7px; }
.mates .leaf { padding-left: 22px; }

/* 3d view */
.viewport {
    flex: 1;
    position: relative;
}
.scene {
    display: block;
    width: 1116px;
    height: 514px;
}
.cube-text {
    font-size: 8px;
    fill: #444;
}
.cube-text .side { font-size: 5px; }
.cube-text .z { fill: #4543c4; font-weight: 500; }
.cube-text .x { fill: #d0404c; font-weight: 500; }
.cursor {
    fill: #fff;
    stroke: #444;
    stroke-width: .8;
}

.dialog {
    position: absolute;
    left: 0;
    top: 0;
    background: #fff;
    box-shadow: 0 1px 5px rgba(0, 0, 0, .4);
    color: #333;
}
.back {
    width: 177px;
    height: 88px;
    display: flex;
    flex-direction: column;
    align-items: flex-end;
    padding-right: 4px;
}
.front {
    width: 147px;
    height: 75px;
    letter-spacing: -0.28px;
}
.dialog-head {
    display: flex;
    align-items: center;
    justify-content: space-between;
    height: 20px;
    padding: 0 6px 0 4px;
    border-bottom: 1px solid #e2e2e2;
    font-weight: 500;
    color: #222;
}
.dialog-head .icon {
    width: 8px;
    height: 8px;
    stroke-width: 1.5;
}
.back .dialog-head {
    width: 177px;
    margin-right: -4px;
    justify-content: flex-end;
}
.cell {
    width: 20px;
    height: 21px;
    border: 1px solid #aaa;
    border-radius: 2px;
    display: flex;
    align-items: center;
    justify-content: center;
    color: #222;
}
.cell .icon {
    width: 10px;
    height: 10px;
}
.plus {
    margin-top: 3px;
    border-color: #ddd;
    color: #888;
}
.plus .icon {
    width: 8px;
    height: 8px;
}
.cell-row {
    display: flex;
    margin-top: 6px;
}
.stub {
    width: 14px;
    justify-content: flex-end;
}
.stub .icon {
    width: 5px;
    height: 5px;
}
.qm {
    width: 8px;
    height: 8px;
    color: #888;
}
.back .qm { margin-top: 5px; }
.select {
    display: flex;
    align-items: center;
    justify-content: space-between;
    margin: 0 18px 0 4px;
    height: 18px;
    border-bottom: 1px solid #eee;
}
.select .icon {
    width: 5px;
    height: 5px;
    margin-right: 4px;
}
.slider {
    height: 2px;
    width: 124px;
    margin: 8px 0 0 7px;
    background: #777;
}
.slider b {
    display: block;
    width: 8px;
    height: 8px;
    border: 1px solid #666;
    border-radius: 50%;
    background: #fff;
    transform: translate(-4px, -3px);
}
.check {
    display: flex;
    align-items: center;
    margin: 10px 4px 0 3px;
    color: #555;
    letter-spacing: -0.35px;
}
.check i {
    width: 8px;
    height: 8px;
    border: 1px solid #ccc;
    border-radius: 1px;
    margin-right: 3px;
}
.check .qm {
    margin-left: auto;
    margin-top: 4px;
}

.flyout {
    position: absolute;
    left: 0;
    top: 240px;
    width: 21px;
    height: 22px;
    background: #fff;
    border: 1px solid #bbb;
    border-left: 0;
    display: flex;
    align-items: center;
    justify-content: center;
}
.apps-col {
    position: absolute;
    right: 0;
    width: 21px;
    background: #fff;
    border: 1px solid #999;
    border-right: 0;
    border-bottom: 0;
}
.top-apps { top: 27px; }
.plugin-apps { top: 166px; }
.apps-col div {
    height: 22px;
    display: flex;
    align-items: center;
    justify-content: center;
    border-bottom: 1px solid #999;
    color: #222;
}
.bg {
    width: 16px;
    height: 16px;
    background: #d9d9d9;
    border-radius: 2px;
    padding: 1px;
}
.mk {
    width: 15px;
    height: 15px;
    background: #154794;
    color: #fff;
    font: 700 8px/15px "Liberation Serif", serif;
    text-align: center;
}
.green { color: #168b2c; }
.sky { color: #4b9add; }
.blue { color: #3f82ca; }
.apps-col .gray { color: #777; }
.full { fill: #111; color: #111; }
.pale { fill: #b9d7e6; color: #56707e; }
.measure {
    position: absolute;
    right: 8px;
    bottom: 3px;
    display: flex;
    gap: 11px;
    color: #222;
}
.measure .icon {
    width: 12px;
    height: 12px;
}

/* document tabs */
.tabs {
    height: 20px;
    flex: none;
    display: flex;
    background: #d8d8d8;
    border-top: 1px solid #eee;
    border-bottom: 1px solid #bbb;
}
.tab-search, .tab-add {
    width: 27px;
    display: flex;
    align-items: center;
    justify-content: center;
    color: #222;
}
.tab-search { background: #fafafa; }
.tab-add {
    padding-right: 6px;
}
.tab-add .icon {
    width: 10px;
    height: 10px;
}
.tab {
    width: 134.6px;
    display: flex;
    align-items: center;
    padding: 0 0 2px 7px;
    background: #e9e9e9;
    border-right: 1px solid #bbb;
    color: #555;
    font-size: 9.5px;
    letter-spacing: -0.14px;
    white-space: nowrap;
}
.tab .icon {
    width: 12px;
    height: 12px;
    margin-right: 3px;
}
.active {
    width: 133px;
    padding: 0 0 0 6px;
    background: #fff;
    color: #333;
    border-bottom: 2px solid #4d62a8;
}

/* taskbar */
.taskbar {
    height: 33px;
    flex: none;
    display: flex;
    background: #1c1c1c;
}
.task {
    width: 41.3px;
    display: flex;
    align-items: center;
    justify-content: center;
}
.task svg {
    width: 14px;
    height: 14px;
}
.task .big {
    width: 20px;
    height: 20px;
}
.start { width: 39px; }
.view {
    width: 37px;
    margin-right: 5px;
}
.run {
    background: linear-gradient(#79b8e0, #79b8e0) center bottom / 34px 2px no-repeat;
}
.current {
    background-color: #4b4b4b;
    background-size: 100% 2px;
}
.tray {
    margin-left: auto;
    display: flex;
    align-items: center;
    color: #fff;
}
.tray svg {
    width: 14px;
    height: 14px;
    margin-right: 12.6px;
}
.time {
    width: 52px;
    margin-left: -5px;
    display: flex;
    flex-direction: column;
    align-items: center;
    font-size: 10px;
    letter-spacing: -0.15px;
    line-height: 15.5px;
}
.tray .notify {
    margin: 0 17px 0 12px;
}
.peek {
    width: 4px;
    height: 33px;
    border-left: 1px solid #666;
}
```
